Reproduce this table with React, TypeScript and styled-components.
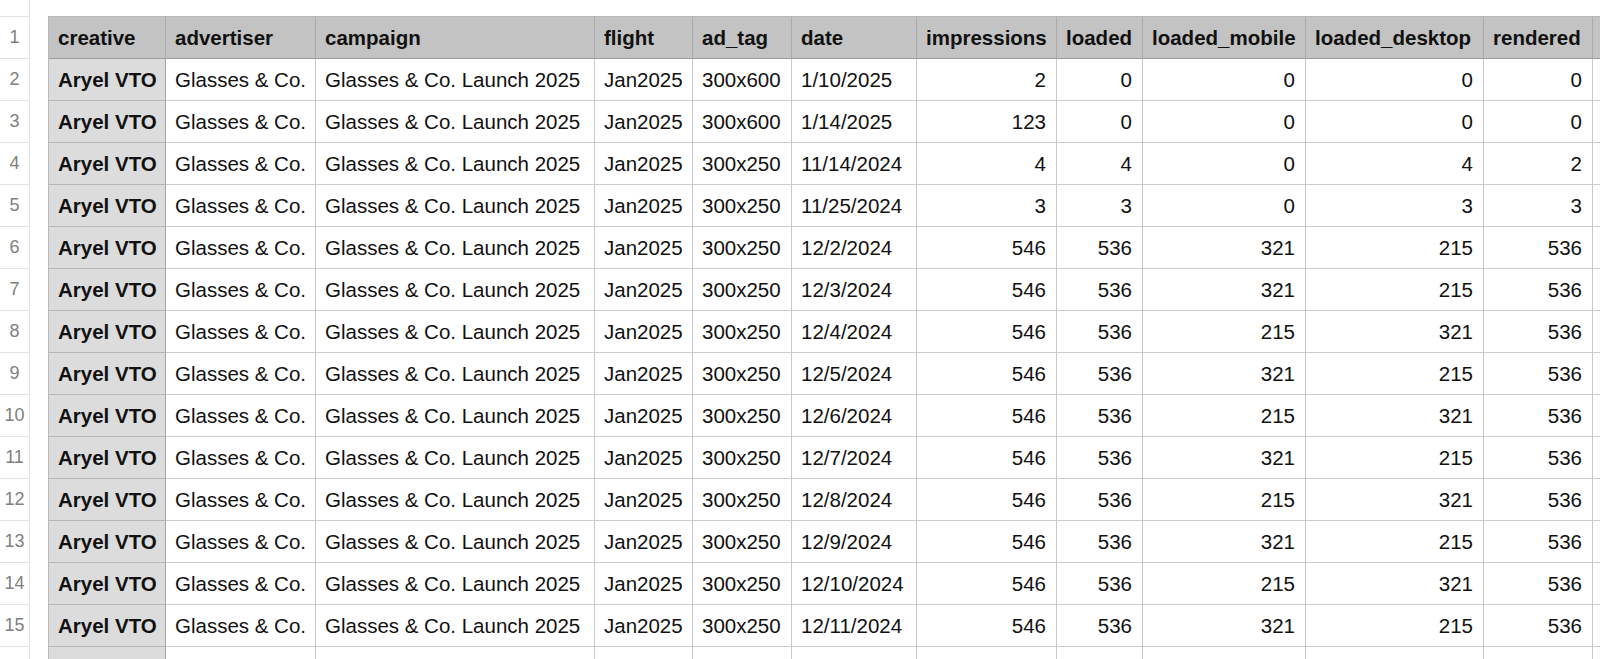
import React from "react";
import styled, { createGlobalStyle } from "styled-components";

const GlobalStyle = createGlobalStyle`
  html, body {
    margin: 0;
    padding: 0;
    background: #ffffff;
    overflow: hidden;
  }
  body {
    font-family: "Liberation Sans", Arial, Helvetica, sans-serif;
    color: #111111;
  }
`;

const Sheet = styled.div`
  display: flex;
  width: 1600px;
  height: 659px;
  overflow: hidden;
`;

const Gutter = styled.div`
  display: flex;
  flex-direction: column;
  width: 29px;
  flex: none;
  border-right: 1px solid #e2e2e2;
`;

const GutterTop = styled.div`
  height: 16px;
  border-bottom: 1px solid #e2e2e2;
  flex: none;
`;

const RowNumber = styled.div`
  height: 41px;
  flex: none;
  border-bottom: 1px solid #e2e2e2;
  display: flex;
  align-items: center;
  justify-content: center;
  font-size: 18px;
  color: #808080;
`;

const TableArea = styled.div`
  flex: 1;
  min-width: 0;
  padding: 16px 0 0 18px;
`;

const COLS = [117, 150, 279, 98, 99, 125, 140, 86, 163, 178, 109];

const Table = styled.div`
  display: grid;
  grid-template-columns: ${COLS.map((w) => `${w}px`).join(" ")} 1fr;
  grid-auto-rows: 42px;
  border-top: 1px solid #b9b9b9;
  border-left: 1px solid #b9b9b9;
`;

const Cell = styled.div<{ $head?: boolean; $first?: boolean; $num?: boolean }>`
  box-sizing: border-box;
  display: flex;
  align-items: center;
  justify-content: ${(p) => (p.$num ? "flex-end" : "flex-start")};
  padding: 0 ${(p) => (p.$num ? "10px" : "9px")} 0 9px;
  white-space: nowrap;
  overflow: hidden;
  font-size: 20.5px;
  font-weight: ${(p) => (p.$head || p.$first ? 700 : 400)};
  color: #111111;
  background: ${(p) => (p.$head ? "#c2c3c2" : p.$first ? "#dcdcdc" : "#ffffff")};
  border-right: 1px solid ${(p) => (p.$head ? "#a9aaa9" : p.$first ? "#a5a5a5" : "#c9c9c9")};
  border-bottom: 1px solid ${(p) => (p.$head ? "#9a9b9a" : p.$first ? "#b5b5b5" : "#cdcdcd")};
`;

const headers = [
  "creative",
  "advertiser",
  "campaign",
  "flight",
  "ad_tag",
  "date",
  "impressions",
  "loaded",
  "loaded_mobile",
  "loaded_desktop",
  "rendered",
  "",
];

type Row = [string, string, number, number, number, number, number];

const rows: Row[] = [
  ["300x600", "1/10/2025", 2, 0, 0, 0, 0],
  ["300x600", "1/14/2025", 123, 0, 0, 0, 0],
  ["300x250", "11/14/2024", 4, 4, 0, 4, 2],
  ["300x250", "11/25/2024", 3, 3, 0, 3, 3],
  ["300x250", "12/2/2024", 546, 536, 321, 215, 536],
  ["300x250", "12/3/2024", 546, 536, 321, 215, 536],
  ["300x250", "12/4/2024", 546, 536, 215, 321, 536],
  ["300x250", "12/5/2024", 546, 536, 321, 215, 536],
  ["300x250", "12/6/2024", 546, 536, 215, 321, 536],
  ["300x250", "12/7/2024", 546, 536, 321, 215, 536],
  ["300x250", "12/8/2024", 546, 536, 215, 321, 536],
  ["300x250", "12/9/2024", 546, 536, 321, 215, 536],
  ["300x250", "12/10/2024", 546, 536, 215, 321, 536],
  ["300x250", "12/11/2024", 546, 536, 321, 215, 536],
];

export default function App() {
  return (
    <>
      <GlobalStyle />
      <Sheet>
        <Gutter>
          <GutterTop />
          {Array.from({ length: 15 }, (_, i) => (
            <RowNumber key={i}>{i + 1}</RowNumber>
          ))}
          <RowNumber />
        </Gutter>
        <TableArea>
          <Table>
            {headers.map((h, i) => (
              <Cell key={`h${i}`} $head>
                {h}
              </Cell>
            ))}
            {rows.map((r, ri) => (
              <React.Fragment key={ri}>
                <Cell $first>Aryel VTO</Cell>
                <Cell>Glasses &amp; Co.</Cell>
                <Cell>Glasses &amp; Co. Launch 2025</Cell>
                <Cell>Jan2025</Cell>
                <Cell>{r[0]}</Cell>
                <Cell>{r[1]}</Cell>
                <Cell $num>{r[2]}</Cell>
                <Cell $num>{r[3]}</Cell>
                <Cell $num>{r[4]}</Cell>
                <Cell $num>{r[5]}</Cell>
                <Cell $num>{r[6]}</Cell>
                <Cell />
              </React.Fragment>
            ))}
            <Cell $first />
            {Array.from({ length: 11 }, (_, i) => (
              <Cell key={`e${i}`} />
            ))}
          </Table>
        </TableArea>
      </Sheet>
    </>
  );
}
